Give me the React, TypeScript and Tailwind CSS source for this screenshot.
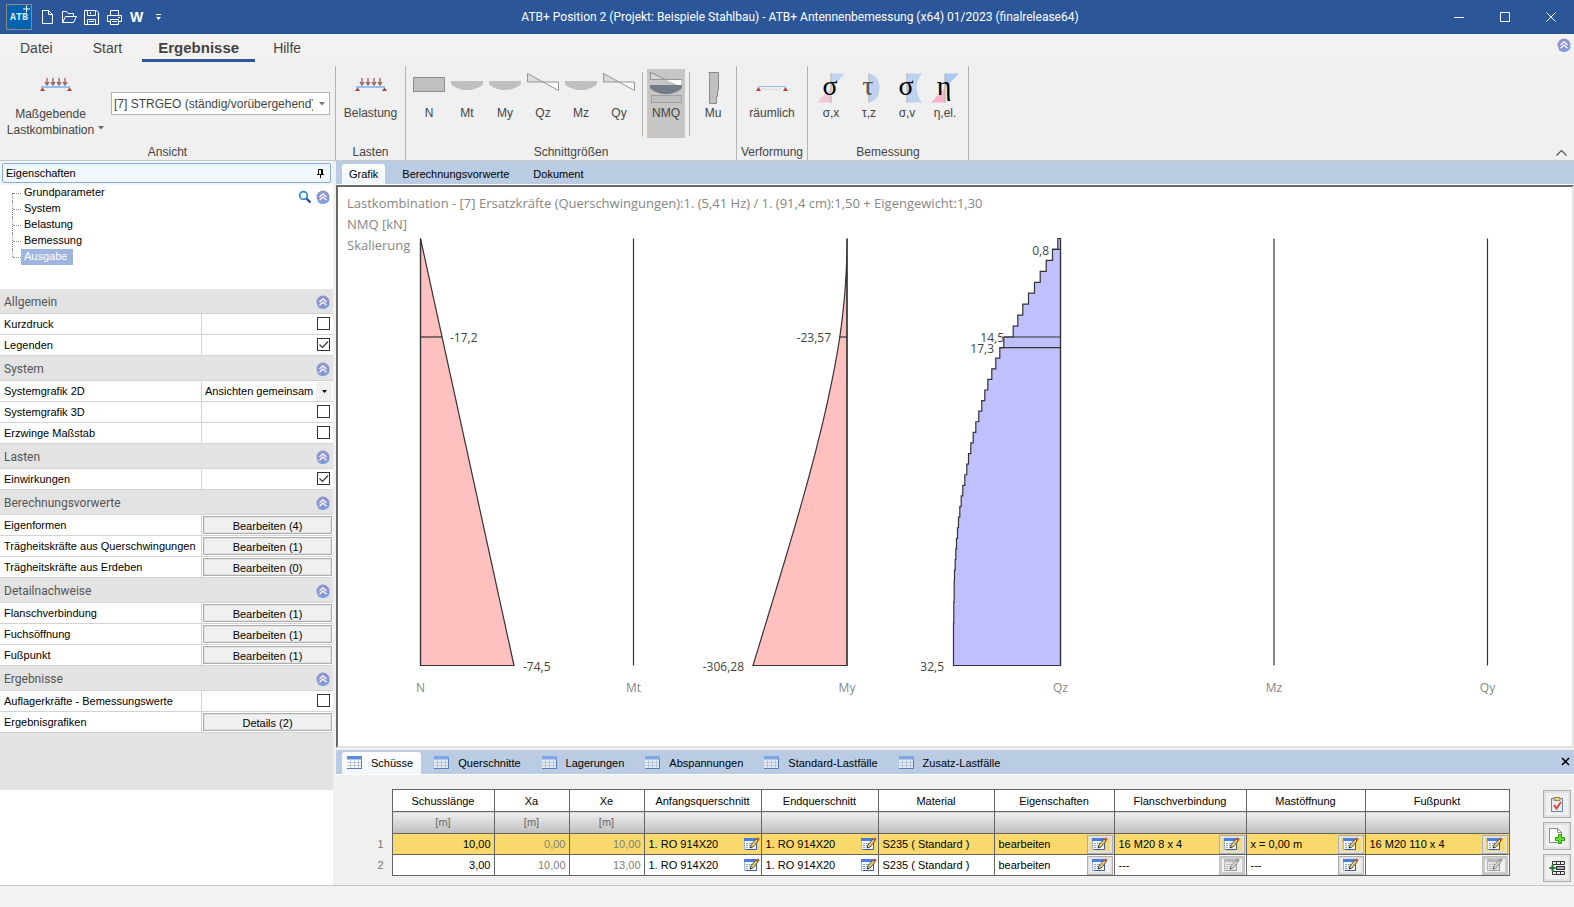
import { useState } from 'react';
import type { ReactNode } from 'react';
import clsx from 'clsx';

type Row =
  | { kind: 'check'; label: string; checked: boolean }
  | { kind: 'button'; label: string; text: string }
  | { kind: 'select'; label: string; text: string };

const sections: { title: string; rows: Row[] }[] = [
  {
    title: 'Allgemein',
    rows: [
      { kind: 'check', label: 'Kurzdruck', checked: false },
      { kind: 'check', label: 'Legenden', checked: true },
    ],
  },
  {
    title: 'System',
    rows: [
      { kind: 'select', label: 'Systemgrafik 2D', text: 'Ansichten gemeinsam' },
      { kind: 'check', label: 'Systemgrafik 3D', checked: false },
      { kind: 'check', label: 'Erzwinge Maßstab', checked: false },
    ],
  },
  {
    title: 'Lasten',
    rows: [{ kind: 'check', label: 'Einwirkungen', checked: true }],
  },
  {
    title: 'Berechnungsvorwerte',
    rows: [
      { kind: 'button', label: 'Eigenformen', text: 'Bearbeiten (4)' },
      { kind: 'button', label: 'Trägheitskräfte aus Querschwingungen', text: 'Bearbeiten (1)' },
      { kind: 'button', label: 'Trägheitskräfte aus Erdeben', text: 'Bearbeiten (0)' },
    ],
  },
  {
    title: 'Detailnachweise',
    rows: [
      { kind: 'button', label: 'Flanschverbindung', text: 'Bearbeiten (1)' },
      { kind: 'button', label: 'Fuchsöffnung', text: 'Bearbeiten (1)' },
      { kind: 'button', label: 'Fußpunkt', text: 'Bearbeiten (1)' },
    ],
  },
  {
    title: 'Ergebnisse',
    rows: [
      { kind: 'check', label: 'Auflagerkräfte - Bemessungswerte', checked: false },
      { kind: 'button', label: 'Ergebnisgrafiken', text: 'Details (2)' },
    ],
  },
];

const treeItems = ['Grundparameter', 'System', 'Belastung', 'Bemessung', 'Ausgabe'];
const viewTabs = ['Grafik', 'Berechnungsvorwerte', 'Dokument'];
const tableTabs = ['Schüsse', 'Querschnitte', 'Lagerungen', 'Abspannungen', 'Standard-Lastfälle', 'Zusatz-Lastfälle'];

/* ---------- icons ---------- */

function CollapseIcon() {
  return (
    <svg width="14" height="14" viewBox="0 0 14 14" className="block">
      <circle cx="7" cy="7" r="6.5" fill="#8f93cf" />
      <path d="M2 11a6.5 6.5 0 0 0 11-2" fill="none" stroke="#6ea3dc" strokeWidth="1.5" />
      <path d="M3.5 7 7 3.8 10.500 7M3.500 10.300 7 7.100l3.500 3.200" fill="none" stroke="#fff" strokeWidth="1.3" />
    </svg>
  );
}

function LoadIcon() {
  return (
    <svg width="32" height="32" viewBox="0 0 32 32">
      <g stroke="#a06a6a" strokeWidth="1.4">
        {[7, 13, 19, 25].map((x) => (
          <path key={x} d={`M${x} 6v6M${x - 2} 10l2 3 2-3`} fill="none" />
        ))}
      </g>
      <rect x="1" y="14" width="29" height="2" fill="#92c3f8" />
      <path d="M0 19 2.500 15.500 5 19zM27 19l2.500-3.500L32 19z" fill="#b83c3c" />
    </svg>
  );
}

function SpatialIcon() {
  return (
    <svg width="32" height="32" viewBox="0 0 32 32">
      <rect x="2" y="14" width="28" height="1" fill="#8cc0f8" />
      <path d="M6 16.500c6 1.500 14 1.500 20 0" fill="none" stroke="#c8c8c8" strokeDasharray="1 1" />
      <path d="M0 19 2.500 15 5 19zM27 19l2.500-4 2.500 4z" fill="#b83c3c" />
    </svg>
  );
}

function ForceIcon({ shape }: { shape: string }) {
  return (
    <svg width="32" height="32" viewBox="0 0 32 32">
      {shape === 'N' && <path d="M.5 20.500v-15h31v14H.5" fill="#c0c0c0" stroke="#8c8c8c" />}
      {shape === 'M' && <path d="M0 9h32v3c-4 4-10 6-16 6S4 16 0 12z" fill="#c0c0c0" />}
      {shape === 'Q' && (
        <>
          <path d="M.5 1.500v8.500h15.500z" fill="#dcdcdc" />
          <path d="M16 10h15.500v8.500z" fill="#fafafa" />
          <path d="M.5 1.500V10h31v8.500z" fill="none" stroke="#959595" />
        </>
      )}
      {shape === 'NMQ' && (
        <>
          <path d="M.5 .5V7.500h31V15z" fill="none" stroke="#959595" />
          <path d="M.5 .5v7h15z" fill="#d6d6d6" stroke="#959595" />
          <path d="M16 8h15.500v7z" fill="#fff" />
          <path d="M0 13h32v3c-4 4-10 6-16 6S4 20 0 16z" fill="#757c89" />
          <rect x="1.500" y="23.500" width="30" height="7" fill="#c0c0c0" stroke="#a0a0a0" />
        </>
      )}
      {shape === 'Mu' && <path d="M11.500 .5h10v18h-1v6h-1v7h-7v-31" fill="#c0c0c0" stroke="#8c8c8c" />}
    </svg>
  );
}

function StressIcon({ shape }: { shape: string }) {
  const glyph = { sx: 'σ', tz: 'τ', sv: 'σ', eta: 'η' }[shape];
  return (
    <svg width="32" height="32" viewBox="0 0 32 32" className="overflow-visible">
      {shape === 'sx' && (
        <>
          <path d="M16 1.500h14L16 16z" fill="#bfd6f4" />
          <path d="M16 16v14.500H2z" fill="#f4c8d8" />
          <path d="M16 1v30" stroke="#b0b0b0" />
        </>
      )}
      {shape === 'tz' && (
        <>
          <path d="M16 2c14 0 14 28 0 28z" fill="#bfd3f1" />
          <path d="M16 1v30" stroke="#b0b0b0" />
        </>
      )}
      {shape === 'sv' && (
        <>
          <path d="M16 1.500h15c-7 8-7 21 0 29H16z" fill="#bfd3f1" />
          <path d="M16 1v30" stroke="#b0b0b0" />
        </>
      )}
      {shape === 'eta' && (
        <>
          <path d="M16 1.500h14L16 16z" fill="#a9c8f2" />
          <path d="M16 16v14.500H2z" fill="#f4b4cc" />
          <path d="M16 1v30" stroke="#b0b0b0" />
        </>
      )}
      <text
        x="15"
        y="23"
        textAnchor="middle"
        fontSize="28"
        fill={shape === 'tz' ? '#555' : '#000'}
        className="font-['Liberation_Serif',serif]"
      >
        {glyph}
      </text>
    </svg>
  );
}

function GridIcon({ active }: { active: boolean }) {
  return (
    <svg width="16" height="14" viewBox="0 0 16 14">
      <rect width="15" height="13" fill={active ? '#fff' : '#e6eefa'} />
      <rect width="15" height="3" fill={active ? '#5b8be0' : '#7fa5ea'} />
      <path d="M0 3.500h15M0 6.500h15M0 9.500h15M3.500 3v10M7.500 3v10M11.500 3v10" stroke="#b8c6da" fill="none" />
      <path d="M0 12.500h15M14.500 3v10" stroke="#5b7cb2" fill="none" />
    </svg>
  );
}

function EditIcon({ disabled }: { disabled?: boolean }) {
  return (
    <svg width="16" height="14" viewBox="0 0 16 14" className="block">
      <rect x=".5" y="1.500" width="12" height="11" fill={disabled ? '#e4e4e4' : '#f4f8ff'} stroke={disabled ? '#b8b8b8' : '#9db4da'} />
      <rect x="0" y="1" width="12" height="3" fill={disabled ? '#b8b8b8' : '#4a7ddc'} />
      <path d="M2 6.500h2M5 6.500h3M2 8.500h2M5 8.500h2M2 10.500h2" stroke={disabled ? '#b8b8b8' : '#8aa4cc'} />
      <path d="M12.500 6v6.500H2" fill="none" stroke={disabled ? '#999' : '#3f5f9c'} />
      <path d="m6 11 1-3 5-6 2 2-5 6z" fill={disabled ? '#d0d0d0' : '#e8cd74'} stroke={disabled ? '#8c8c8c' : '#4c4630'} strokeWidth=".9" />
      <path d="m11.800 2.200 1.700-2 2.300 1.800-1.800 2.200z" fill={disabled ? '#999' : '#b4574e'} />
      <path d="m5.800 11.300.6-1.800 1.300 1z" fill="#222" />
    </svg>
  );
}

/* ---------- title bar ---------- */

function TitleBar() {
  return (
    <header className="flex h-[34px] items-stretch bg-[#2b579a] text-white">
      <div className="flex w-[164px] shrink-0 items-center gap-2 pl-[6px]">
        <svg width="26" height="26" viewBox="0 0 26 26">
          <rect x=".5" y=".5" width="25" height="25" fill="#0062b0" stroke="#8a8a80" />
          <text x="13" y="16" textAnchor="middle" fontSize="10" fontWeight="bold" fill="#dbe9f6" className="font-['Liberation_Mono',monospace]">
            ATB
          </text>
          <path d="M20.500 1.500v7M17 5h7" stroke="#fff" />
        </svg>
        <button aria-label="Neu" className="ml-px">
          <svg width="13" height="16" viewBox="0 0 13 16" fill="none" stroke="#fff">
            <path d="M1.500 1.500h6l4 4v9h-10zM7.500 1.500v4h4" />
          </svg>
        </button>
        <button aria-label="Öffnen">
          <svg width="15" height="14" viewBox="0 0 15 14" fill="none" stroke="#fff">
            <path d="M.5 12.500v-11h4l1.500 2h5.500v3M.5 12.500l3-6h11l-3 6z" />
          </svg>
        </button>
        <button aria-label="Speichern" className="-ml-px">
          <svg width="15" height="15" viewBox="0 0 15 15" fill="none" stroke="#fff">
            <path d="M.5 .5h12l2 2v12H.5zM3.500 .5v5h8v-5M3.500 14.500v-5h8v5M6.500 2v2M5 11.500h5" />
          </svg>
        </button>
        <button aria-label="Drucken">
          <svg width="15" height="15" viewBox="0 0 15 15" fill="none" stroke="#fff">
            <path d="M3.500 5.500v-5h8v5M3.500 11.500h-3v-6h14v6h-3M3.500 9.500h8v5h-8zM5 11.500h5M11 7.500h2" />
          </svg>
        </button>
        <button aria-label="Word" className="font-['Liberation_Sans',sans-serif] text-sm font-bold">W</button>
        <button aria-label="Anpassen" className="ml-1">
          <svg width="7" height="7" viewBox="0 0 7 7" fill="#fff">
            <path d="M1 0h5v1H1zM1 3h5L3.500 6z" />
          </svg>
        </button>
      </div>
      <div className="flex min-w-0 flex-1 items-center justify-center truncate font-['Roboto',sans-serif] text-xs">
        ATB+ Position 2 (Projekt: Beispiele Stahlbau) - ATB+ Antennenbemessung (x64) 01/2023 (finalrelease64)
      </div>
      <div className="flex shrink-0">
        {[
          ['Minimieren', 'M0 5.500h10'],
          ['Maximieren', 'M.5 .5h9v9h-9z'],
          ['Schließen', 'm.5.5 9 9M9.500.5l-9 9'],
        ].map(([label, d]) => (
          <button key={label} aria-label={label} className="flex w-[46px] items-center justify-center">
            <svg width="10" height="10" viewBox="0 0 10 10" fill="none" stroke="#fff">
              <path d={d} />
            </svg>
          </button>
        ))}
      </div>
    </header>
  );
}

/* ---------- ribbon ---------- */

function RibbonGroup({ title, className, children }: { title: string; className: string; children: ReactNode }) {
  return (
    <section className={clsx('flex shrink-0 flex-col border-r border-[#b4b4b4]', className)}>
      <div className="flex flex-1 items-start pt-[3px]">{children}</div>
      <h2 className="text-center leading-4">{title}</h2>
    </section>
  );
}

function RibbonButton({ label, icon, wide, active }: { label: string; icon: ReactNode; wide?: boolean; active?: boolean }) {
  return (
    <button
      className={clsx(
        'flex h-[69px] flex-col items-center pt-[3px]',
        wide ? 'w-full' : 'w-[38px]',
        active && 'bg-[#c8c6c4]'
      )}
    >
      {icon}
      <span className="leading-[18px]">{label}</span>
    </button>
  );
}

function Ribbon() {
  return (
    <div className="border-b border-[#c8c8c8] bg-[#f0f0f0] text-[#444]">
      <nav className="flex h-7 items-start bg-[#f3f2f1] text-sm">
        <button className="h-7 px-5">Datei</button>
        <button className="h-7 px-5">Start</button>
        <button className="h-7 border-b-[3px] border-[#2b579a] px-4 pt-[2px] text-[15px] leading-6 font-bold">Ergebnisse</button>
        <button className="h-7 px-[18px]">Hilfe</button>
        <button aria-label="Menüband" className="mt-1 mr-[3px] ml-auto">
          <CollapseIcon />
        </button>
      </nav>
      <div className="flex pt-1 text-xs">
        <div className="flex h-[94px] min-w-0 flex-1">
          <RibbonGroup title="Ansicht" className="w-[336px]">
            <button className="flex w-[104px] flex-col items-center gap-[2px] pt-[3px] pl-2">
              <LoadIcon />
              <span className="flex items-end leading-4">
                <span>
                  Maßgebende
                  <br />
                  Lastkombination
                </span>
                <svg width="7" height="4" viewBox="0 0 7 4" className="mb-2 ml-1 shrink-0">
                  <path d="M0 0h6L3 3.500z" fill="#666" />
                </svg>
              </span>
            </button>
            <div className="relative mt-[23px] ml-[7px] flex-1 pr-[5px]">
              <select
                aria-label="Lastkombination"
                className="block h-[23px] w-full appearance-none overflow-hidden border border-[#b4b4b4] bg-white pr-4 pl-[2px]"
              >
                <option>[7] STRGEO (ständig/vorübergehend)</option>
              </select>
              <svg width="6" height="4" viewBox="0 0 6 4" className="pointer-events-none absolute top-[10px] right-[10px]">
                <path d="M0 0h6L3 3.500z" fill="#777" />
              </svg>
            </div>
          </RibbonGroup>
          <RibbonGroup title="Lasten" className="w-[70px]">
            <RibbonButton wide label="Belastung" icon={<LoadIcon />} />
          </RibbonGroup>
          <RibbonGroup title="Schnittgrößen" className="w-[331px]">
            <div className="flex pl-1">
              <RibbonButton label="N" icon={<ForceIcon shape="N" />} />
              <RibbonButton label="Mt" icon={<ForceIcon shape="M" />} />
              <RibbonButton label="My" icon={<ForceIcon shape="M" />} />
              <RibbonButton label="Qz" icon={<ForceIcon shape="Q" />} />
              <RibbonButton label="Mz" icon={<ForceIcon shape="M" />} />
              <RibbonButton label="Qy" icon={<ForceIcon shape="Q" />} />
              <div className="mx-1 mt-[3px] h-16 border-l border-[#b4b4b4]" />
              <RibbonButton active label="NMQ" icon={<ForceIcon shape="NMQ" />} />
              <div className="mx-1 mt-[3px] h-16 border-l border-[#b4b4b4]" />
              <RibbonButton label="Mu" icon={<ForceIcon shape="Mu" />} />
            </div>
          </RibbonGroup>
          <RibbonGroup title="Verformung" className="w-[71px]">
            <RibbonButton wide label="räumlich" icon={<SpatialIcon />} />
          </RibbonGroup>
          <RibbonGroup title="Bemessung" className="w-[161px]">
            <div className="flex pl-1">
              <RibbonButton label="σ,x" icon={<StressIcon shape="sx" />} />
              <RibbonButton label="τ,z" icon={<StressIcon shape="tz" />} />
              <RibbonButton label="σ,v" icon={<StressIcon shape="sv" />} />
              <RibbonButton label="η,el." icon={<StressIcon shape="eta" />} />
            </div>
          </RibbonGroup>
        </div>
        <button aria-label="Menüband reduzieren" className="mr-[7px] mb-1 self-end">
          <svg width="11" height="6" viewBox="0 0 11 6" fill="none" stroke="#555" strokeWidth="1.2">
            <path d="m.5 5.500 5-5 5 5" />
          </svg>
        </button>
      </div>
    </div>
  );
}

/* ---------- property panel ---------- */

function PropertyRow({ row }: { row: Row }) {
  const id = row.label.replace(/\s+/g, '-').toLowerCase();
  const [checked, setChecked] = useState(row.kind === 'check' && row.checked);

  return (
    <div className="flex h-[21px] border-b border-[#d2d2d2] bg-white">
      <label htmlFor={id} className="w-[202px] truncate border-r border-[#d2d2d2] pl-1 leading-5">
        {row.label}
      </label>
      <div className="relative flex flex-1 items-center justify-end">
        {row.kind === 'check' && (
          <span className="relative mr-[3px] mb-px">
            <input
              id={id}
              type="checkbox"
              checked={checked}
              onChange={(e) => setChecked(e.target.checked)}
              className="block size-[13px] appearance-none border border-[#333] bg-white"
            />
            {checked && (
              <svg width="13" height="13" viewBox="0 0 13 13" className="pointer-events-none absolute inset-0">
                <path d="m2.500 6.500 3 3 5.500-6" fill="none" stroke="#333" strokeWidth="1.2" />
              </svg>
            )}
          </span>
        )}
        {row.kind === 'button' && (
          <button id={id} className="mx-[1px] h-[18px] w-full border border-[#adadad] bg-[#f0f0f0] pt-px leading-4 shadow-[inset_0_0_0_1px_#e1e1e1]">
            {row.text}
          </button>
        )}
        {row.kind === 'select' && (
          <>
            <select id={id} className="h-full w-full appearance-none bg-white pr-4 pl-[3px]">
              <option>{row.text}</option>
            </select>
            <span className="pointer-events-none absolute right-[1px] flex h-[19px] w-4 items-center justify-center bg-[#f0f0f0]">
              <svg width="5" height="3" viewBox="0 0 5 3">
                <path d="M0 0h5L2.500 3z" />
              </svg>
            </span>
          </>
        )}
      </div>
    </div>
  );
}

function PropertyPanel() {
  const [selected, setSelected] = useState('Ausgabe');

  return (
    <aside className="flex w-[333px] shrink-0 flex-col bg-white text-[11px] text-black">
      <div className="bg-[#f0f7ff] p-[2px]">
        <div className="flex h-5 items-center justify-between rounded-[2px] border border-[#86abdc] pr-[6px] pl-[3px]">
          <h2>Eigenschaften</h2>
          <button aria-label="Anheften">
            <svg width="7" height="9" viewBox="0 0 7 9" fill="none" stroke="#000">
              <path d="M1.500 5V.5h4V5M4.500 .5V5M0 5.500h7M3.500 6v3" />
            </svg>
          </button>
        </div>
      </div>
      <div className="flex h-[104px] items-start justify-between pr-[3px] pl-3">
        <ul>
          {treeItems.map((item, i) => (
            <li key={item} className="flex h-4">
              <span className={clsx('w-[1px] border-l border-dotted border-[#888]', i === 4 ? 'h-2' : 'h-4', i === 0 && 'mt-2')} />
              <span className="mt-2 h-px w-2 border-t border-dotted border-[#888]" />
              <button
                onClick={() => setSelected(item)}
                className={clsx('flex h-4 pr-[6px] pl-[3px] leading-[15px]', selected === item && 'bg-[#9db5e0] text-white')}
              >
                {item}
              </button>
            </li>
          ))}
        </ul>
        <div className="mt-[5px] flex items-center gap-1">
          <button aria-label="Suchen">
            <svg width="14" height="14" viewBox="0 0 14 14" fill="none">
              <path d="m8 8 4.500 4.500" stroke="#27408e" strokeWidth="2.2" />
              <circle cx="5.500" cy="5.500" r="3.800" stroke="#2a86c8" strokeWidth="1.700" />
            </svg>
          </button>
          <button aria-label="Alle einklappen">
            <CollapseIcon />
          </button>
        </div>
      </div>
      <div className="bg-[#e3e3e3] pb-[57px]">
        {sections.map((section) => (
          <section key={section.title}>
            <div className="flex h-[25px] items-center justify-between border-b border-[#d2d2d2] pt-px pr-[3px] pl-1">
              <h3 className="font-['Roboto',sans-serif] text-xs text-[#555]">{section.title}</h3>
              <button aria-label={`${section.title} einklappen`}>
                <CollapseIcon />
              </button>
            </div>
            {section.rows.map((row) => (
              <PropertyRow key={row.label} row={row} />
            ))}
          </section>
        ))}
      </div>
    </aside>
  );
}

/* ---------- chart ---------- */

const TOP = 51.5;
const MID = 150;
const BOTTOM = 478.5;

// Shear widths per segment, first nine belong to the upper shot
const shearSteps = [
  2.7, 8, 14.3, 20.3, 26, 32, 37.7, 42.7, 47.3, 56.7, 60.7, 64.7, 68.7, 72.7, 75.7, 78.7, 81.7, 84.7, 87.3, 89.7, 92,
  93.7, 95.7, 97.7, 99.3, 100.7, 102, 103, 104, 104.7, 105.3, 106, 106.3, 106.3, 106.7, 106.7, 107, 107, 107, 107,
];

const levelAt = (i: number) => (i <= 9 ? TOP + ((MID - TOP) / 9) * i : MID + ((BOTTOM - MID) / 31) * (i - 9));

const shearPath = (x: number) =>
  `M${x} ${TOP}` + shearSteps.map((w, i) => `L${x - w} ${levelAt(i)}L${x - w} ${levelAt(i + 1)}`).join('') + `L${x} ${BOTTOM}Z`;

const momentPath = (x: number, width: number) => {
  const sums = [0];
  shearSteps.forEach((w, i) => sums.push(sums[i] + w * (levelAt(i + 1) - levelAt(i))));
  const total = sums[sums.length - 1];
  return `M${x} ${TOP}` + sums.map((s, i) => `L${x - (s / total) * width} ${levelAt(i)}`).join('') + `L${x} ${BOTTOM}Z`;
};

const axes = [
  { label: 'N', x: 82.5 },
  { label: 'Mt', x: 295.5 },
  { label: 'My', x: 509 },
  { label: 'Qz', x: 722.5 },
  { label: 'Mz', x: 936 },
  { label: 'Qy', x: 1149.5 },
];

const values: { text: string; x: number; y: number; end?: boolean }[] = [
  { text: '-17,2', x: 112, y: 155 },
  { text: '-74,5', x: 185, y: 484 },
  { text: '-23,57', x: 493, y: 155, end: true },
  { text: '-306,28', x: 406, y: 484, end: true },
  { text: '0,8', x: 711, y: 68, end: true },
  { text: '14,5', x: 666, y: 155, end: true },
  { text: '17,3', x: 656, y: 166, end: true },
  { text: '32,5', x: 606, y: 484, end: true },
];

function ForceChart() {
  return (
    <svg viewBox="0 0 1234 558" className="block w-full font-['Open_Sans',sans-serif] text-[13px]">
      <g fill="#868686">
        <text x="9" y="21">Lastkombination - [7] Ersatzkräfte (Querschwingungen):1. (5,41 Hz) / 1. (91,4 cm):1,50 + Eigengewicht:1,30</text>
        <text x="9" y="42">NMQ [kN]</text>
        <text x="9" y="63">Skalierung</text>
      </g>
      <g stroke="#333" strokeWidth="1.2">
        <path d={`M82.500 ${TOP}L176 ${BOTTOM}H82.500Z`} fill="#ffc0c0" />
        <path d={`M82.500 ${MID}H104`} />
        <path d={momentPath(509, 94)} fill="#ffc0c0" />
        <path d={`M501.500 ${MID}H509`} />
        <path d={shearPath(722.5)} fill="#c0c0ff" />
        <path d={`M714 ${levelAt(1)}H722M666 ${MID}H722M662 ${levelAt(10)}H722`} />
        {axes.map((a) => (
          <path key={a.label} d={`M${a.x} ${TOP}V${BOTTOM}`} />
        ))}
      </g>
      <g fill="#868686" textAnchor="middle" className="text-xs">
        {axes.map((a) => (
          <text key={a.label} x={a.x} y="505">{a.label}</text>
        ))}
      </g>
      <g fill="#444" className="text-xs">
        {values.map((v) => (
          <text key={v.text} x={v.x} y={v.y} textAnchor={v.end ? 'end' : 'start'}>{v.text}</text>
        ))}
      </g>
    </svg>
  );
}

/* ---------- table ---------- */

const columns = [
  { title: 'Schusslänge', unit: '[m]', width: 'w-[102px]' },
  { title: 'Xa', unit: '[m]', width: 'w-[75px]' },
  { title: 'Xe', unit: '[m]', width: 'w-[75px]' },
  { title: 'Anfangsquerschnitt', unit: '', width: 'w-[117px]' },
  { title: 'Endquerschnitt', unit: '', width: 'w-[117px]' },
  { title: 'Material', unit: '', width: 'w-[116px]' },
  { title: 'Eigenschaften', unit: '', width: 'w-[120px]' },
  { title: 'Flanschverbindung', unit: '', width: 'w-[132px]' },
  { title: 'Mastöffnung', unit: '', width: 'w-[119px]' },
  { title: 'Fußpunkt', unit: '', width: 'w-[144px]' },
];

type Cell = { text: string; look: 'num' | 'calc' | 'plain' | 'edit' | 'button' | 'disabled' };

const shots: Cell[][] = [
  [
    { text: '10,00', look: 'num' },
    { text: '0,00', look: 'calc' },
    { text: '10,00', look: 'calc' },
    { text: '1. RO 914X20', look: 'edit' },
    { text: '1. RO 914X20', look: 'edit' },
    { text: 'S235 ( Standard )', look: 'plain' },
    { text: 'bearbeiten', look: 'button' },
    { text: '16 M20 8 x 4', look: 'button' },
    { text: 'x = 0,00 m', look: 'button' },
    { text: '16 M20 110 x 4', look: 'button' },
  ],
  [
    { text: '3,00', look: 'num' },
    { text: '10,00', look: 'calc' },
    { text: '13,00', look: 'calc' },
    { text: '1. RO 914X20', look: 'edit' },
    { text: '1. RO 914X20', look: 'edit' },
    { text: 'S235 ( Standard )', look: 'plain' },
    { text: 'bearbeiten', look: 'button' },
    { text: '---', look: 'disabled' },
    { text: '---', look: 'button' },
    { text: '', look: 'disabled' },
  ],
];

function TableCell({ cell, highlight }: { cell: Cell; highlight: boolean }) {
  return (
    <td className={clsx('border border-[#646464] p-0', highlight ? 'bg-[#fad96c]' : 'bg-white')}>
      <div
        className={clsx(
          'flex h-5 items-center',
          cell.look === 'num' && 'justify-end pr-[3px]',
          cell.look === 'calc' && 'justify-end pr-[3px] text-[#808080]',
          cell.look !== 'num' && cell.look !== 'calc' && 'justify-between pr-[1px] pl-1'
        )}
      >
        <span>{cell.text}</span>
        {cell.look === 'edit' && (
          <button aria-label="Bearbeiten">
            <EditIcon />
          </button>
        )}
        {(cell.look === 'button' || cell.look === 'disabled') && (
          <button
            aria-label="Bearbeiten"
            disabled={cell.look === 'disabled'}
            className={clsx(
              'flex h-[19px] w-[26px] items-center justify-center border',
              cell.look === 'disabled'
                ? 'border-[#bfbfbf] bg-[#f0f0f0] shadow-[inset_0_0_0_2px_#cccccc]'
                : 'border-[#adadad] shadow-[inset_0_0_0_2px_#e1e1e1]',
              cell.look === 'button' && (highlight ? 'bg-[#fad96c]' : 'bg-[#f0f0f0]')
            )}
          >
            <EditIcon disabled={cell.look === 'disabled'} />
          </button>
        )}
      </div>
    </td>
  );
}

function ShotTable() {
  return (
    <table className="table-fixed border-collapse">
      <thead>
        <tr>
          <th className="w-[24px] p-0" />
          {columns.map((c) => (
            <th key={c.title} className={clsx('h-[22px] border border-[#646464] bg-white p-0 pt-px font-normal', c.width)}>
              {c.title}
            </th>
          ))}
        </tr>
        <tr>
          <th className="p-0" />
          {columns.map((c) => (
            <th
              key={c.title}
              className="h-[22px] border border-[#646464] bg-linear-to-b from-[#f0f0f0] to-[#bebebe] p-0 font-normal text-[#666]"
            >
              {c.unit}
            </th>
          ))}
        </tr>
      </thead>
      <tbody>
        {shots.map((cells, i) => (
          <tr key={i}>
            <th className="h-[21px] p-0 pr-2 text-right font-normal text-[#777]">{i + 1}</th>
            {cells.map((cell, n) => (
              <TableCell key={n} cell={cell} highlight={i === 0} />
            ))}
          </tr>
        ))}
      </tbody>
    </table>
  );
}

function SideButton({ label, children }: { label: string; children: ReactNode }) {
  return (
    <button
      aria-label={label}
      className="flex size-7 items-center justify-center border border-[#adadad] bg-[#f0f0f0] shadow-[inset_0_0_0_2px_#e1e1e1]"
    >
      {children}
    </button>
  );
}

function TablePane() {
  const [tab, setTab] = useState('Schüsse');

  return (
    <section className="bg-[#f0f0f0]">
      <div className="flex h-[25px] items-end gap-2 border-b border-white bg-[#b9cce4] pl-[6px]">
        {tableTabs.map((t) => (
          <button
            key={t}
            onClick={() => setTab(t)}
            className={clsx(
              'flex h-[22px] items-center gap-2 rounded-t-[3px] px-[5px] pr-2 whitespace-nowrap',
              tab === t && 'bg-linear-to-b from-white to-[#eff7ff]'
            )}
          >
            <GridIcon active={tab === t} />
            {t}
          </button>
        ))}
        <button aria-label="Schließen" className="mr-1 mb-2 ml-auto">
          <svg width="9" height="9" viewBox="0 0 9 9" stroke="#000" strokeWidth="1.500">
            <path d="m1 1 7 7M8 1 1 8" />
          </svg>
        </button>
      </div>
      <div className="flex h-[110px] items-start justify-between pr-[3px] pl-8">
        <div className="mt-[14px]">
          <ShotTable />
        </div>
        <div className="mt-[15px] flex flex-col gap-1">
          <SideButton label="Prüfen">
            <svg width="16" height="16" viewBox="0 0 16 16">
              <rect x="2.500" y="2.500" width="11" height="13" fill="#e2ecfa" stroke="#6f87ad" />
              <path d="M5 1.500h6v3H5z" fill="#e8cf86" stroke="#998247" />
              <path d="m5 9 2.500 3.500L12 6" fill="none" stroke="#e0452c" strokeWidth="2" />
            </svg>
          </SideButton>
          <SideButton label="Hinzufügen">
            <svg width="18" height="18" viewBox="0 0 18 18">
              <path d="M1.500 1.500h8l4 4v10h-12z" fill="#fff" stroke="#8c8c8c" />
              <path d="M9.500 1.500v4h4" fill="none" stroke="#8c8c8c" />
              <path d="M10.500 7.500h3v3h3v3h-3v3h-3v-3h-3v-3h3z" fill="#5fe02c" stroke="#2c9a14" />
            </svg>
          </SideButton>
          <SideButton label="Zeile einfügen">
            <svg width="17" height="16" viewBox="0 0 17 16" fill="none" stroke="#333">
              <path d="M3.500 1.500h12v3h-12zM7.500 1.500v3M11.500 1.500v3M3.500 11.500h12v3h-12zM7.500 11.500v3M11.500 11.500v3" />
              <rect x="7.500" y="6.500" width="8" height="3" fill="#aaa" />
              <path d="M3.500 5v6M.5 8h6" stroke="#1f7a2c" strokeWidth="2" />
            </svg>
          </SideButton>
        </div>
      </div>
    </section>
  );
}

export default function App() {
  const [view, setView] = useState('Grafik');

  return (
    <div className="flex min-h-screen flex-col bg-[#f0f0f0] font-['Liberation_Sans',sans-serif]">
      <TitleBar />
      <Ribbon />
      <div className="flex flex-1">
        <PropertyPanel />
        <main className="ml-[3px] flex min-w-0 flex-1 flex-col text-[11px] text-black">
          <div className="flex h-6 items-end gap-[10px] border-b border-white bg-[#b9cce4] pl-[6px]">
            {viewTabs.map((t) => (
              <button
                key={t}
                onClick={() => setView(t)}
                className={clsx(
                  'h-5 rounded-t-[3px] px-[7px] leading-4',
                  view === t && 'bg-linear-to-b from-white to-[#eff7ff]'
                )}
              >
                {t}
              </button>
            ))}
          </div>
          <div className="flex-1 border-2 border-t-[#696969] border-r-[#e3e3e3] border-b-[#e3e3e3] border-l-[#696969] bg-white">
            <ForceChart />
          </div>
          <div className="h-[2px]" />
          <TablePane />
        </main>
      </div>
      <footer className="h-[22px] border-t border-[#c8c8c8] bg-[#f3f2f1]" />
    </div>
  );
}
